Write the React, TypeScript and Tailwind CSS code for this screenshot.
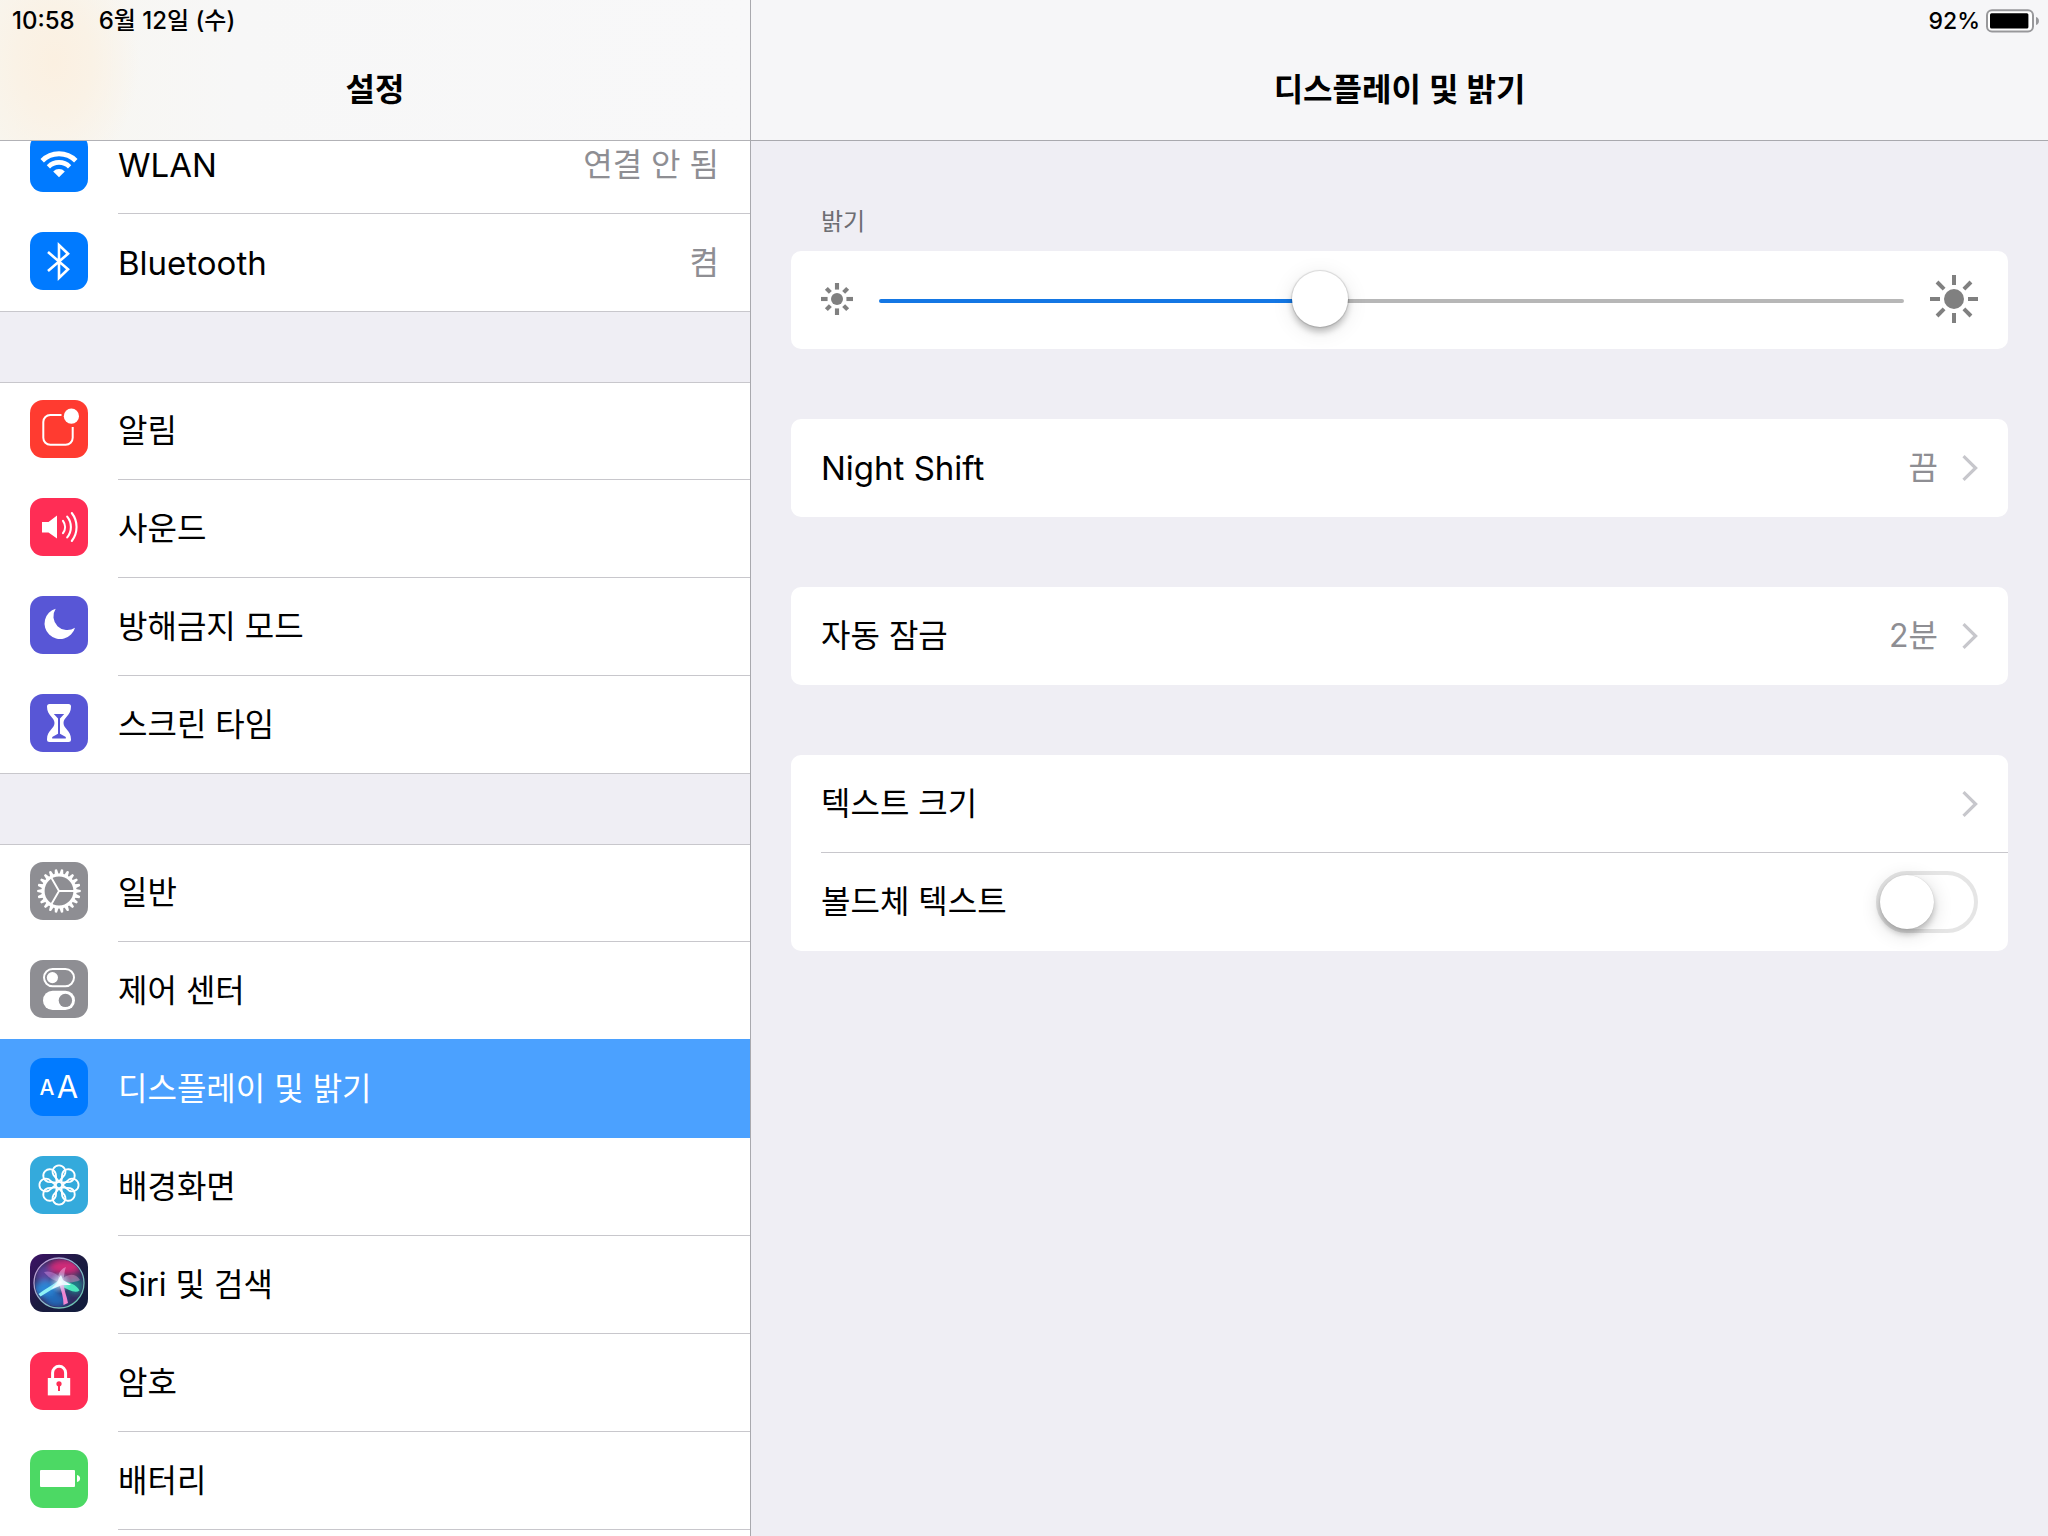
import { useState, type CSSProperties, type ReactNode } from "react";

function Tile({ fill, children }: { fill: string; children: ReactNode }) {
  return (
    <svg viewBox="0 0 58 58" className="mt-[18px] size-[58px] shrink-0 self-start" aria-hidden="true">
      <rect width="58" height="58" rx="13" fill={fill} />
      {children}
    </svg>
  );
}

const WifiIcon = () => (
  <Tile fill="#007aff">
    <g fill="none" stroke="#fff">
      <path d="M12.2 26.8A23.6 23.6 0 0 1 45.8 26.8" strokeWidth="4.8" />
      <path d="M18.4 32.8A15 15 0 0 1 39.6 32.8" strokeWidth="4.6" />
    </g>
    <path d="M29 43.2L23.2 37.4A8.2 8.2 0 0 1 34.8 37.4Z" fill="#fff" />
  </Tile>
);

const BluetoothIcon = () => (
  <Tile fill="#007aff">
    <path d="M18 20L38 37.2L29 46V13L38 21.8L18 39" fill="none" stroke="#fff" strokeWidth="2.6" />
  </Tile>
);

const NotificationsIcon = () => (
  <Tile fill="#ff3b30">
    <path
      d="M31.5 15H20.3A7 7 0 0 0 13.3 22V37.8A7 7 0 0 0 20.3 44.8H35.7A7 7 0 0 0 42.7 37.8V27"
      fill="none"
      stroke="#fff"
      strokeWidth="2"
    />
    <circle cx="41.4" cy="16.2" r="7.6" fill="#fff" />
  </Tile>
);

const SoundsIcon = () => (
  <Tile fill="#ff2d55">
    <path d="M12 24H18.5L27 17.6V40.4L18.5 34.4H12Z" fill="#fff" />
    <g fill="none" stroke="#fff" strokeWidth="2.1" strokeLinecap="round">
      <path d="M33 22.8A10.5 10.5 0 0 1 33 35.2" />
      <path d="M37.2 18.6A16.5 16.5 0 0 1 37.2 39.4" />
      <path d="M41.8 15A23 23 0 0 1 41.8 43" />
    </g>
  </Tile>
);

const MoonIcon = () => (
  <Tile fill="#5856d6">
    <path d="M25.7 12.7A15.5 15.5 0 1 0 45 31.7A13.8 13.8 0 0 1 25.7 12.7Z" fill="#fff" />
  </Tile>
);

const HourglassIcon = () => (
  <Tile fill="#5856d6">
    <path
      d="M19.5 10H38.5Q41 10 41 12.5C41 22 33.5 23 33.5 29C33.5 35 41 36 41 45.5Q41 48 38.5 48H19.5Q17 48 17 45.5C17 36 24.5 35 24.5 29C24.5 23 17 22 17 12.5Q17 10 19.5 10Z"
      fill="#fff"
    />
    <path d="M23.8 20H34.2L30 24.6V39.8L35.8 43V44.6H22.2V43L28 39.8V24.6Z" fill="#5856d6" />
  </Tile>
);

const GEAR_TEETH = Array.from({ length: 22 }, (_, i) => (i * 360) / 22);

const GearIcon = () => (
  <Tile fill="#8e8e93">
    <g transform="translate(29 29)">
      <circle r="16" fill="none" stroke="#fff" strokeWidth="3.2" />
      {GEAR_TEETH.map((a) => (
        <path key={a} d="M16.8 -2L21.6 -1.1Q22.2 0 21.6 1.1L16.8 2Z" fill="#fff" transform={`rotate(${a})`} />
      ))}
      <path d="M0 0H15M0 0L-7.5 -13M0 0L-7.5 13" stroke="#fff" strokeWidth="1.9" />
    </g>
  </Tile>
);

const ControlCenterIcon = () => (
  <Tile fill="#8e8e93">
    <rect x="14" y="9" width="30" height="17.2" rx="8.6" fill="none" stroke="#fff" strokeWidth="2" />
    <circle cx="22.4" cy="17.6" r="5.6" fill="#fff" />
    <rect x="13" y="30.8" width="32" height="19.2" rx="9.6" fill="#fff" />
    <circle cx="35.4" cy="40.4" r="6.7" fill="#8e8e93" />
  </Tile>
);

const DisplayIcon = () => (
  <Tile fill="#007aff">
    <g fill="#fff" textAnchor="middle" fontFamily="Inter, sans-serif">
      <text x="17" y="37" fontSize="21" fontWeight="500">A</text>
      <text x="37.5" y="39.6" fontSize="31">A</text>
    </g>
  </Tile>
);

const PETALS = [0, 45, 90, 135, 180, 225, 270, 315];

const WallpaperIcon = () => (
  <Tile fill="#34aadc">
    <g transform="translate(29 29)" fill="none" stroke="#fff" strokeWidth="1.8">
      <circle r="3.2" />
      {PETALS.map((a) => (
        <path key={a} d="M0 -3.4L-5.6 -10.1A6.4 6.4 0 1 1 5.6 -10.1Z" transform={`rotate(${a})`} />
      ))}
    </g>
  </Tile>
);

const SiriIcon = () => (
  <Tile fill="url(#siri-bg)">
    <defs>
      <linearGradient id="siri-bg" x1="0" y1="0" x2="1" y2="1">
        <stop offset="0" stopColor="#3d1266" />
        <stop offset="0.5" stopColor="#1b1b40" />
        <stop offset="1" stopColor="#101c3c" />
      </linearGradient>
      <linearGradient id="siri-ring" x1="0" y1="0" x2="1" y2="1">
        <stop offset="0" stopColor="#c890d4" />
        <stop offset="0.5" stopColor="#8fb4cc" />
        <stop offset="1" stopColor="#5cc8a8" />
      </linearGradient>
      <clipPath id="siri-orb">
        <circle cx="29" cy="29" r="24" />
      </clipPath>
      <filter id="siri-soft" x="-50%" y="-50%" width="200%" height="200%">
        <feGaussianBlur stdDeviation="3.4" />
      </filter>
      <filter id="siri-glow" x="-50%" y="-50%" width="200%" height="200%">
        <feGaussianBlur stdDeviation="0.7" />
      </filter>
      <radialGradient id="siri-core">
        <stop offset="0" stopColor="#fff" stopOpacity="0.95" />
        <stop offset="0.35" stopColor="#d8f4ff" stopOpacity="0.6" />
        <stop offset="1" stopColor="#9ad8ff" stopOpacity="0" />
      </radialGradient>
    </defs>
    <circle cx="29" cy="29" r="24.6" fill="#33285f" />
    <g clipPath="url(#siri-orb)">
      <g filter="url(#siri-soft)">
        <ellipse cx="35" cy="13" rx="16" ry="8" fill="#cf2a78" />
        <ellipse cx="14" cy="20" rx="8" ry="9" fill="#5c3f9c" />
        <ellipse cx="16" cy="35" rx="12" ry="9" fill="#2a86d6" />
        <ellipse cx="26" cy="46" rx="11" ry="7" fill="#2469b8" />
        <ellipse cx="45" cy="32" rx="8" ry="8" fill="#1f8088" />
      </g>
      <g filter="url(#siri-glow)">
        <path d="M30 28C23 27 17 22 14 18C21 16 28 20 32 26Z" fill="#c98be0" opacity="0.5" />
        <path d="M29 27C27 21 30 15 36 13C34 18 34 24 33 28Z" fill="#f2b0e4" opacity="0.55" />
        <path d="M31 27C36 19 46 19 50 26C45 29 38 28 32 30Z" fill="#d98ac4" opacity="0.5" />
        <path d="M30 25L34 30L21 36L10.5 42.5L8.5 40C16 34 24 31 30 25Z" fill="#8ff2f6" />
        <path d="M30 27C38 27 47 31 49.5 36.5C45 40 38 35 30 32Z" fill="#4be6bc" />
        <path d="M28.5 29L33.5 29C34 36 37 43 38 49L33.5 51C33.5 44 31.5 36 28.5 29Z" fill="#ef86d2" />
        <path d="M29 24L31 21L33 26L41 31L32 31L21 35L27 29Z" fill="#fff" />
      </g>
      <circle cx="30" cy="28.5" r="11" fill="url(#siri-core)" />
    </g>
    <circle cx="29" cy="29" r="25" fill="none" stroke="url(#siri-ring)" strokeWidth="1.3" />
  </Tile>
);

const LockIcon = () => (
  <Tile fill="#ff2d55">
    <path d="M22.6 27V20.8A6.5 6.5 0 0 1 35.6 20.8V27" fill="none" stroke="#fff" strokeWidth="3" />
    <rect x="17.8" y="26" width="22.4" height="17.4" fill="#fff" />
    <circle cx="29" cy="31.8" r="2.6" fill="#ff2d55" />
    <path d="M29 32V39" stroke="#ff2d55" strokeWidth="2" />
  </Tile>
);

const BatteryIcon = () => (
  <Tile fill="#4cd964">
    <rect x="10" y="20" width="35" height="17" rx="1" fill="#fff" />
    <path d="M47 25A4 3.6 0 0 1 47 32Z" fill="#fff" />
  </Tile>
);

type Item = { label: string; icon: ReactNode; value?: string; selected?: boolean; latin?: boolean };

const GROUPS: Item[][] = [
  [
    { label: "WLAN", icon: <WifiIcon />, value: "연결 안 됨", latin: true },
    { label: "Bluetooth", icon: <BluetoothIcon />, value: "켬", latin: true },
  ],
  [
    { label: "알림", icon: <NotificationsIcon /> },
    { label: "사운드", icon: <SoundsIcon /> },
    { label: "방해금지 모드", icon: <MoonIcon /> },
    { label: "스크린 타임", icon: <HourglassIcon /> },
  ],
  [
    { label: "일반", icon: <GearIcon /> },
    { label: "제어 센터", icon: <ControlCenterIcon /> },
    { label: "디스플레이 및 밝기", icon: <DisplayIcon />, selected: true },
    { label: "배경화면", icon: <WallpaperIcon /> },
    { label: "Siri 및 검색", icon: <SiriIcon /> },
    { label: "암호", icon: <LockIcon /> },
    { label: "배터리", icon: <BatteryIcon /> },
  ],
];

function SidebarRow({ item, closing }: { item: Item; closing: boolean }) {
  const box = item.selected
    ? "relative -mt-px h-[99px] bg-[#4ba1ff] pt-px text-white"
    : closing
      ? "h-[98px] border-b border-[#c8c7cc]"
      : "h-[98px]";
  const line = item.selected || closing ? "" : "border-b border-[#c8c7cc]";
  return (
    <li>
      <a href="#" aria-current={item.selected ? "page" : undefined} className={`flex gap-[30px] pl-[30px] ${box}`}>
        {item.icon}
        <span className={`flex flex-1 items-center justify-between pr-[31px] ${line}`}>
          <span className={item.latin ? "text-[33px]" : undefined}>{item.label}</span>
          {item.value && <span className="text-[#8e8e93]">{item.value}</span>}
        </span>
      </a>
    </li>
  );
}

function Sidebar() {
  return (
    <aside className="flex w-[36.67%] shrink-0 flex-col border-r border-[#a9a9ae]">
      <header className="relative z-10 flex h-[141px] shrink-0 flex-col border-b border-[#b2b2b6] bg-[#f8f8f8] bg-[radial-gradient(ellipse_85px_120px_at_54px_62px,#fbf0e1_0%,#faf2e6_45%,transparent_100%),linear-gradient(to_right,#f8f6ef_0px,#f7f7f7_240px,#f8f8f9_100%)]">
        <div className="flex h-[42px] items-center gap-6 px-3 text-[24px] font-medium">
          <time>10:58</time>
          <span>6월 12일 (수)</span>
        </div>
        <h1 className="flex h-[96px] items-center justify-center text-[32px] font-semibold">설정</h1>
      </header>
      <nav aria-label="설정" className="-mt-[25px] flex min-h-0 flex-1 flex-col overflow-hidden">
        <div className="flex shrink-0 flex-col gap-[70px]">
          {GROUPS.map((group, g) => (
            <ul key={g} className="bg-white shadow-[inset_0_1px_0_#c8c7cc]">
              {group.map((item, i) => (
                <SidebarRow
                  key={item.label}
                  item={item}
                  closing={i === group.length - 1 && g < GROUPS.length - 1}
                />
              ))}
            </ul>
          ))}
        </div>
        <div className="flex-1 bg-white" />
      </nav>
    </aside>
  );
}

const RAYS = [0, 45, 90, 135, 180, 225, 270, 315];

const SmallSun = () => (
  <svg viewBox="-17 -17 34 34" className="mb-0.5 size-8 shrink-0" aria-hidden="true">
    <circle r="6.4" fill="#808080" />
    {RAYS.map((a) => (
      <path key={a} d={a % 90 ? "M10 0H16" : "M10 0H17"} stroke="#808080" strokeWidth="4.4" transform={`rotate(${a})`} />
    ))}
  </svg>
);

const LargeSun = () => (
  <svg viewBox="-24 -24 48 48" className="mb-0.5 size-12 shrink-0" aria-hidden="true">
    <circle r="10" fill="#808080" />
    {RAYS.map((a) => (
      <path key={a} d="M14 0H24" stroke="#808080" strokeWidth="4" transform={`rotate(${a})`} />
    ))}
  </svg>
);

const Chevron = () => (
  <svg viewBox="0 0 16 26" className="h-[26px] w-4 shrink-0" aria-hidden="true">
    <path d="M1.5 1.2L13.6 13L1.5 24.8" fill="none" stroke="#c7c7cc" strokeWidth="3.2" />
  </svg>
);

function LinkCard({ label, value, latin }: { label: string; value: string; latin?: boolean }) {
  return (
    <a href="#" className="flex h-[98px] items-center gap-6 rounded-[10px] bg-white px-[30px]">
      <span className={latin ? "flex-1 text-[33px]" : "flex-1"}>{label}</span>
      <span className="text-[#8e8e93]">{value}</span>
      <Chevron />
    </a>
  );
}

function BrightnessSlider() {
  const [level, setLevel] = useState(426);
  const fraction = level / 1000;
  const style = { "--fill": `calc(28px + (100% - 56px) * ${fraction})` } as CSSProperties;
  return (
    <div className="flex h-[98px] items-center rounded-[10px] bg-white px-[30px]">
      <SmallSun />
      <input
        id="brightness"
        type="range"
        min={0}
        max={1000}
        value={level}
        onChange={(e) => setLevel(Number(e.target.value))}
        style={style}
        className="mt-0.5 mr-[26px] ml-[26px] h-1 min-w-0 flex-1 cursor-pointer appearance-none rounded-full bg-[linear-gradient(to_right,#1477e4_var(--fill),#b7b7b7_var(--fill))] [&::-webkit-slider-thumb]:mb-1 [&::-webkit-slider-thumb]:size-14 [&::-webkit-slider-thumb]:appearance-none [&::-webkit-slider-thumb]:rounded-full [&::-webkit-slider-thumb]:bg-white [&::-webkit-slider-thumb]:shadow-[0_0_1px_1px_rgba(0,0,0,0.12),0_5px_6px_rgba(0,0,0,0.22),0_4px_22px_rgba(0,0,0,0.1)]"
      />
      <LargeSun />
    </div>
  );
}

function DetailPane() {
  const [bold, setBold] = useState(false);
  return (
    <main className="flex min-w-0 flex-1 flex-col bg-[#efeef4]">
      <header className="flex h-[141px] shrink-0 flex-col border-b border-[#a9a9ae] bg-[#f6f6f8]">
        <div className="flex h-[42px] items-center justify-end gap-[6px] pr-2 text-[23px] font-medium">
          <span>92%</span>
          <svg viewBox="0 0 54 24" className="h-6 w-[54px]" aria-hidden="true">
            <rect x="1" y="1.2" width="46" height="21.4" rx="5" fill="#fff" stroke="#98989b" strokeWidth="2" />
            <rect x="4" y="4.3" width="38.4" height="15.2" rx="1.5" fill="#000" />
            <path d="M50 8A4.2 4.2 0 0 1 50 16Z" fill="#98989b" />
          </svg>
        </div>
        <h2 className="flex h-[96px] items-center justify-center text-[32px] font-semibold">디스플레이 및 밝기</h2>
      </header>
      <div className="flex flex-col gap-[70px] px-10 pt-[61px]">
        <section>
          <label htmlFor="brightness" className="flex h-[49px] items-start pl-[30px] text-[24px] leading-[40px] text-[#6d6d72]">
            밝기
          </label>
          <BrightnessSlider />
        </section>
        <LinkCard label="Night Shift" value="끔" latin />
        <LinkCard label="자동 잠금" value="2분" />
        <section className="rounded-[10px] bg-white pl-[30px]">
          <a href="#" className="flex h-[98px] items-center justify-between border-b border-[#c8c7cc] pr-[30px]">
            <span>텍스트 크기</span>
            <Chevron />
          </a>
          <label className="flex h-[98px] items-center justify-between pr-[30px]">
            <span>볼드체 텍스트</span>
            <input
              type="checkbox"
              role="switch"
              checked={bold}
              onChange={(e) => setBold(e.target.checked)}
              className="h-[62px] w-[102px] cursor-pointer appearance-none rounded-full border-4 border-[#e5e5e5] bg-white before:block before:size-[54px] before:rounded-full before:bg-white before:shadow-[0_0_1px_rgba(0,0,0,0.2),0_5px_6px_rgba(0,0,0,0.2),0_4px_20px_rgba(0,0,0,0.16)] checked:border-[#4cd964] checked:bg-[#4cd964] checked:before:translate-x-10"
            />
          </label>
        </section>
      </div>
    </main>
  );
}

export default function App() {
  return (
    <div className="flex h-screen overflow-hidden bg-[#efeef4] font-[Inter,'Noto_Sans_CJK_KR',sans-serif] text-[32px] leading-[48px] text-black">
      <Sidebar />
      <DetailPane />
    </div>
  );
}
